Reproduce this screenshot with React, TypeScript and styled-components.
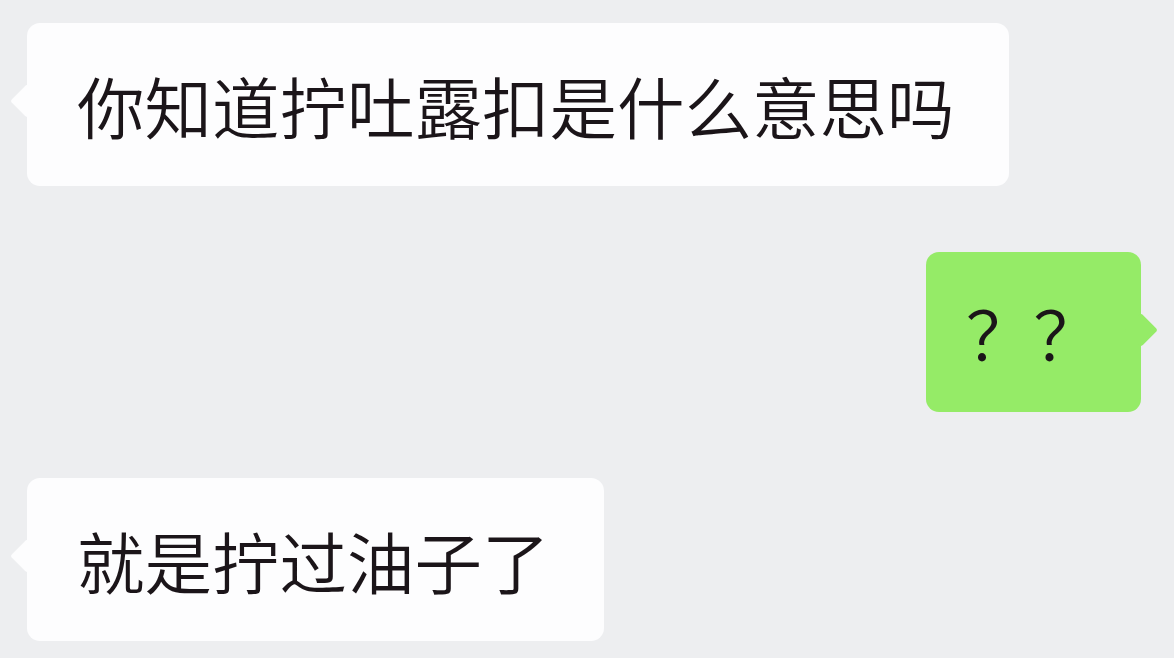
import styled, { createGlobalStyle } from 'styled-components'

const PAGE_BACKGROUND = '#EDEEF0';
const BUBBLE_WHITE = '#FDFDFE';
const BUBBLE_GREEN = '#95EB67';
const TEXT_COLOR = '#1B1519';

const GlobalStyle = createGlobalStyle`
  html, body {
    margin: 0;
    padding: 0;
    background: ${PAGE_BACKGROUND};
  }
  body {
    font-family: "Noto Sans CJK SC", "Noto Sans", sans-serif;
  }
`

type Side = 'left' | 'right';

const messages: { side: Side; text: string }[] = [
  { side: 'left', text: '你知道拧吐露扣是什么意思吗' },
  { side: 'right', text: '？？' },
  { side: 'left', text: '就是拧过油子了' },
];

function App() {
  return (
    <>
      <GlobalStyle />
      <Chat>
        {messages.map((m, i) => (
          <Bubble key={i} $side={m.side}>{m.text}</Bubble>
        ))}
      </Chat>
    </>
  )
}

const Chat = styled.div`
  width: 1174px;
  height: 658px;
  box-sizing: border-box;
  padding: 23px 33px 0 27px;
  display: flex;
  flex-direction: column;
  align-items: flex-start;
  gap: 66px;
  background: ${PAGE_BACKGROUND};
  overflow: hidden;
`

const Bubble = styled.div<{ $side: Side }>`
  position: relative;
  align-self: ${p => (p.$side === 'right' ? 'flex-end' : 'flex-start')};
  background: ${p => (p.$side === 'right' ? BUBBLE_GREEN : BUBBLE_WHITE)};
  color: ${TEXT_COLOR};
  border-radius: 13px;
  padding: ${p => (p.$side === 'right' ? '46px 40px 46px' : '48px 54px 47px 50px')};
  font-size: 67.5px;
  line-height: 68px;
  font-weight: 350;
  white-space: nowrap;
  letter-spacing: 0;

  &::before {
    content: '';
    position: absolute;
    top: 78px;
    ${p => (p.$side === 'right' ? 'right: -12px;' : 'left: -12px;')}
    width: 24px;
    height: 24px;
    margin-top: -12px;
    background: inherit;
    border-radius: 3px;
    transform: rotate(45deg);
  }
`

export default App
